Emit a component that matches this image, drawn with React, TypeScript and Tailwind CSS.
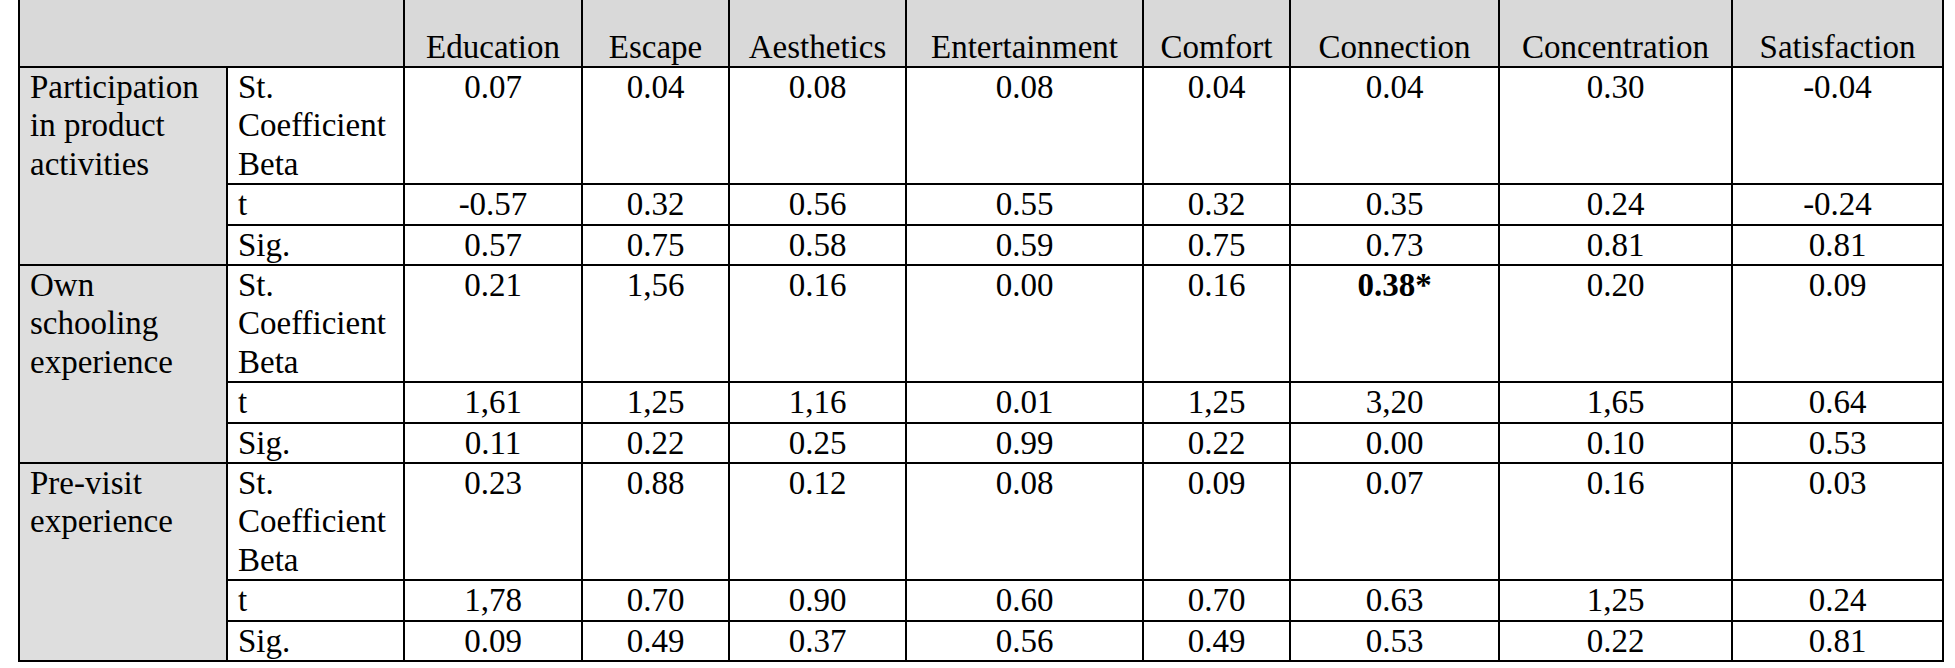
const columns = [
  "Education",
  "Escape",
  "Aesthetics",
  "Entertainment",
  "Comfort",
  "Connection",
  "Concentration",
  "Satisfaction",
];

type Group = {
  label: string[];
  beta: string[];
  t: string[];
  sig: string[];
  bold?: number;
};

const groups: Group[] = [
  {
    label: ["Participation", "in product", "activities"],
    beta: ["0.07", "0.04", "0.08", "0.08", "0.04", "0.04", "0.30", "-0.04"],
    t: ["-0.57", "0.32", "0.56", "0.55", "0.32", "0.35", "0.24", "-0.24"],
    sig: ["0.57", "0.75", "0.58", "0.59", "0.75", "0.73", "0.81", "0.81"],
  },
  {
    label: ["Own", "schooling", "experience"],
    beta: ["0.21", "1,56", "0.16", "0.00", "0.16", "0.38*", "0.20", "0.09"],
    t: ["1,61", "1,25", "1,16", "0.01", "1,25", "3,20", "1,65", "0.64"],
    sig: ["0.11", "0.22", "0.25", "0.99", "0.22", "0.00", "0.10", "0.53"],
    bold: 5,
  },
  {
    label: ["Pre-visit", "experience"],
    beta: ["0.23", "0.88", "0.12", "0.08", "0.09", "0.07", "0.16", "0.03"],
    t: ["1,78", "0.70", "0.90", "0.60", "0.70", "0.63", "1,25", "0.24"],
    sig: ["0.09", "0.49", "0.37", "0.56", "0.49", "0.53", "0.22", "0.81"],
  },
];

const widths = ["w-[208px]", "w-[177px]", "w-[178px]", "w-[147px]", "w-[177px]", "w-[237px]", "w-[147px]", "w-[209px]", "w-[233px]", "w-[211px]"];

const cell = "border-2 border-black px-[10px] py-0 align-top";

export default function App() {
  return (
    <div className="min-h-[668px] w-[1955px] bg-white pl-[18px] text-black" style={{ fontFamily: '"Liberation Serif", "Times New Roman", serif' }}>
      <table className="table-fixed border-collapse text-[33px] leading-[38.4px]">
        <colgroup>
          {widths.map((w, i) => (
            <col key={i} className={w} />
          ))}
        </colgroup>
        <thead>
          <tr className="h-[67px] bg-[#d9d9d9]">
            <th colSpan={2} className="border-2 border-t-0 border-black p-0" />
            {columns.map((c) => (
              <th key={c} className="border-2 border-t-0 border-black px-0 pb-0 text-center align-bottom font-normal whitespace-nowrap">
                {c}
              </th>
            ))}
          </tr>
        </thead>
        <tbody>
          {groups.map((g) => (
            <StatGroup key={g.label.join(" ")} group={g} />
          ))}
        </tbody>
      </table>
    </div>
  );
}

function StatGroup({ group }: { group: Group }) {
  return (
    <>
      <tr>
        <td rowSpan={3} className={`${cell} bg-[#dedede]`}>
          {group.label.map((l) => (
            <div key={l}>{l}</div>
          ))}
        </td>
        <td className={cell}>
          <div>St.</div>
          <div>Coefficient</div>
          <div>Beta</div>
        </td>
        {group.beta.map((v, i) => (
          <td key={i} className={`${cell} text-center ${group.bold === i ? "font-bold" : ""}`}>
            {v}
          </td>
        ))}
      </tr>
      <tr>
        <td className={cell}>t</td>
        {group.t.map((v, i) => (
          <td key={i} className={`${cell} text-center`}>
            {v}
          </td>
        ))}
      </tr>
      <tr>
        <td className={cell}>Sig.</td>
        {group.sig.map((v, i) => (
          <td key={i} className={`${cell} text-center`}>
            {v}
          </td>
        ))}
      </tr>
    </>
  );
}
